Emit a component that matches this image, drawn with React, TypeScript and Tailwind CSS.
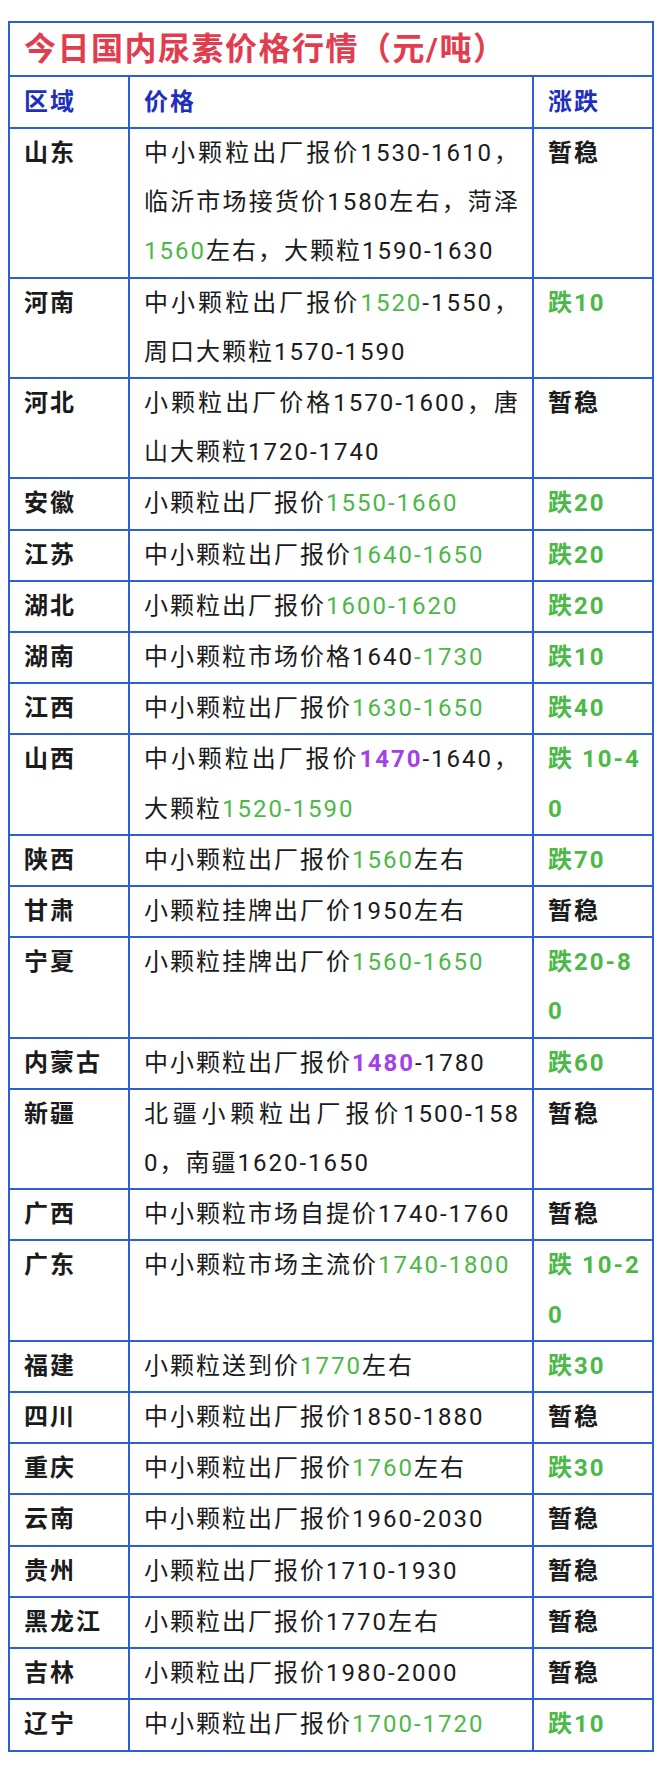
import React from 'react';

type Tone = 'k' | 'g' | 'p';
type Seg = [string, Tone];

type Row = {
  area: string;
  price: Seg[][];
  change: string[];
  green?: boolean;
};

const toneClass: Record<Tone, string> = {
  k: 'text-[#1b1b1b]',
  g: 'text-[#4cb848]',
  p: 'text-[#a441e6] font-bold',
};

const rows: Row[] = [
  {
    area: '山东',
    price: [
      [['中小颗粒出厂报价1530-1610，', 'k']],
      [['临沂市场接货价1580左右，菏泽', 'k']],
      [['1560', 'g'], ['左右，大颗粒1590-1630', 'k']],
    ],
    change: ['暂稳'],
  },
  {
    area: '河南',
    price: [
      [['中小颗粒出厂报价', 'k'], ['1520', 'g'], ['-1550，', 'k']],
      [['周口大颗粒1570-1590', 'k']],
    ],
    change: ['跌10'],
    green: true,
  },
  {
    area: '河北',
    price: [[['小颗粒出厂价格1570-1600，唐', 'k']], [['山大颗粒1720-1740', 'k']]],
    change: ['暂稳'],
  },
  { area: '安徽', price: [[['小颗粒出厂报价', 'k'], ['1550-1660', 'g']]], change: ['跌20'], green: true },
  { area: '江苏', price: [[['中小颗粒出厂报价', 'k'], ['1640-1650', 'g']]], change: ['跌20'], green: true },
  { area: '湖北', price: [[['小颗粒出厂报价', 'k'], ['1600-1620', 'g']]], change: ['跌20'], green: true },
  { area: '湖南', price: [[['中小颗粒市场价格1640', 'k'], ['-1730', 'g']]], change: ['跌10'], green: true },
  { area: '江西', price: [[['中小颗粒出厂报价', 'k'], ['1630-1650', 'g']]], change: ['跌40'], green: true },
  {
    area: '山西',
    price: [
      [['中小颗粒出厂报价', 'k'], ['1470', 'p'], ['-1640，', 'k']],
      [['大颗粒', 'k'], ['1520-1590', 'g']],
    ],
    change: ['跌 10-4', '0'],
    green: true,
  },
  { area: '陕西', price: [[['中小颗粒出厂报价', 'k'], ['1560', 'g'], ['左右', 'k']]], change: ['跌70'], green: true },
  { area: '甘肃', price: [[['小颗粒挂牌出厂价1950左右', 'k']]], change: ['暂稳'] },
  {
    area: '宁夏',
    price: [[['小颗粒挂牌出厂价', 'k'], ['1560-1650', 'g']]],
    change: ['跌20-8', '0'],
    green: true,
  },
  { area: '内蒙古', price: [[['中小颗粒出厂报价', 'k'], ['1480', 'p'], ['-1780', 'k']]], change: ['跌60'], green: true },
  {
    area: '新疆',
    price: [[['北疆小颗粒出厂报价1500-158', 'k']], [['0，南疆1620-1650', 'k']]],
    change: ['暂稳'],
  },
  { area: '广西', price: [[['中小颗粒市场自提价1740-1760', 'k']]], change: ['暂稳'] },
  {
    area: '广东',
    price: [[['中小颗粒市场主流价', 'k'], ['1740-1800', 'g']]],
    change: ['跌 10-2', '0'],
    green: true,
  },
  { area: '福建', price: [[['小颗粒送到价', 'k'], ['1770', 'g'], ['左右', 'k']]], change: ['跌30'], green: true },
  { area: '四川', price: [[['中小颗粒出厂报价1850-1880', 'k']]], change: ['暂稳'] },
  { area: '重庆', price: [[['中小颗粒出厂报价', 'k'], ['1760', 'g'], ['左右', 'k']]], change: ['跌30'], green: true },
  { area: '云南', price: [[['中小颗粒出厂报价1960-2030', 'k']]], change: ['暂稳'] },
  { area: '贵州', price: [[['小颗粒出厂报价1710-1930', 'k']]], change: ['暂稳'] },
  { area: '黑龙江', price: [[['小颗粒出厂报价1770左右', 'k']]], change: ['暂稳'] },
  { area: '吉林', price: [[['小颗粒出厂报价1980-2000', 'k']]], change: ['暂稳'] },
  { area: '辽宁', price: [[['中小颗粒出厂报价', 'k'], ['1700-1720', 'g']]], change: ['跌10'], green: true },
];

const cell = 'border-2 border-[#2d5fd4] align-top pl-[14px] leading-[49.2px]';

const App = () => {
  return (
    <div className="min-h-[1770px] w-[660px] bg-white pt-[21px] pl-[8px] [font-family:Roboto,'Noto_Sans_CJK_SC',sans-serif] text-[24px] tracking-[2px] text-[#1b1b1b]">
      <table className="table-fixed border-collapse w-[644px]">
        <colgroup>
          <col className="w-[120px]" />
          <col className="w-[404px]" />
          <col className="w-[120px]" />
        </colgroup>
        <thead>
          {/* Title */}
          <tr>
            <th
              colSpan={3}
              className="border-2 border-[#2d5fd4] h-[54px] pl-[14px] text-left align-middle text-[32px] font-bold tracking-[1.5px] leading-none text-[#e23d4f]"
            >
              今日国内尿素价格行情（元/吨）
            </th>
          </tr>
          <tr className="text-[#1f2fbd] font-bold text-left">
            <th className="border-2 border-[#2d5fd4] h-[52px] pl-[14px] align-middle">区域</th>
            <th className="border-2 border-[#2d5fd4] h-[52px] pl-[14px] align-middle">价格</th>
            <th className="border-2 border-[#2d5fd4] h-[52px] pl-[14px] align-middle">涨跌</th>
          </tr>
        </thead>
        <tbody>
          {rows.map((row) => (
            <tr key={row.area}>
              <td className={`${cell} font-bold`}>{row.area}</td>
              <td className={`${cell} pr-[12px]`}>
                {row.price.map((line, i) => (
                  <div
                    key={i}
                    className={i < row.price.length - 1 ? 'text-justify [text-align-last:justify]' : ''}
                  >
                    {line.map(([text, tone], j) => (
                      <span key={j} className={toneClass[tone]}>
                        {text}
                      </span>
                    ))}
                  </div>
                ))}
              </td>
              <td className={`${cell} font-bold whitespace-pre ${row.green ? 'text-[#4cb848]' : 'text-[#1b1b1b]'}`}>
                {row.change.map((c, i) => (
                  <div key={i}>{c}</div>
                ))}
              </td>
            </tr>
          ))}
        </tbody>
      </table>
    </div>
  );
};

export default App;
